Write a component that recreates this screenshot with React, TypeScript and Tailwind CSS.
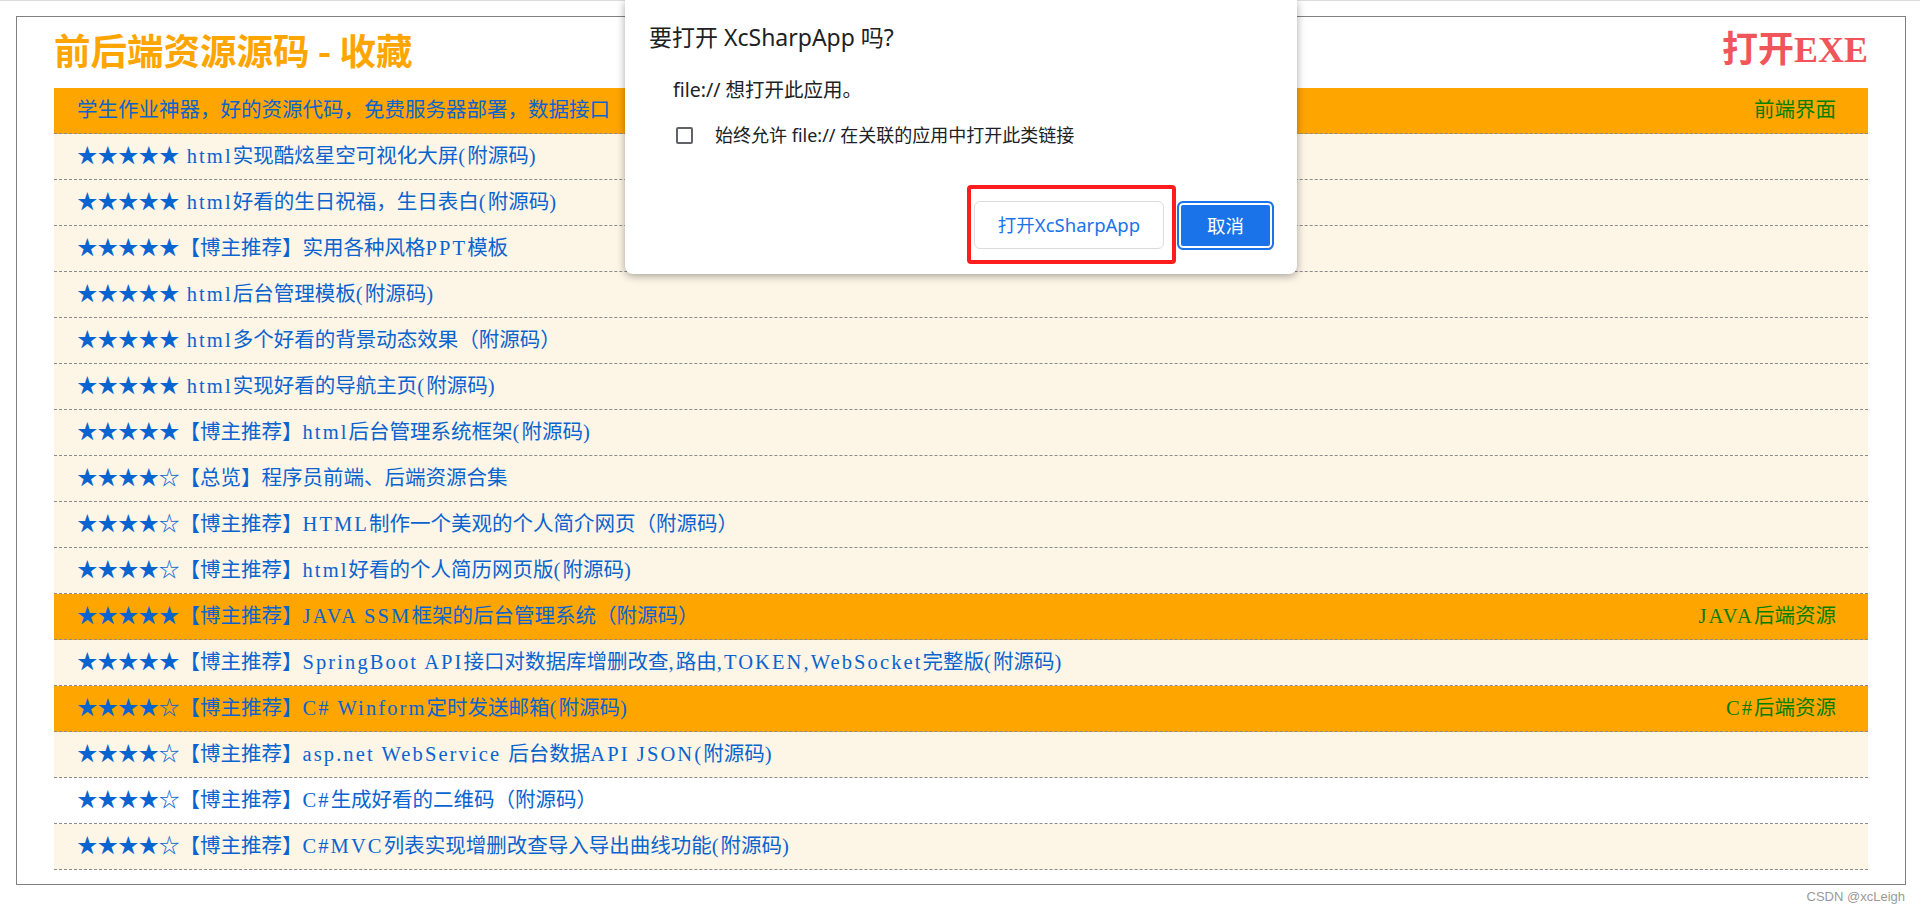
import { memo } from 'react';

type Row = {
  text: string;
  tag?: string;
  head?: boolean;
  white?: boolean;
};

const rows: Row[] = [
  {
    text: '学生作业神器，好的资源代码，免费服务器部署，数据接口',
    tag: '前端界面',
    head: true,
  },
  { text: '★★★★★ html实现酷炫星空可视化大屏(附源码)' },
  { text: '★★★★★ html好看的生日祝福，生日表白(附源码)' },
  { text: '★★★★★【博主推荐】实用各种风格PPT模板' },
  { text: '★★★★★ html后台管理模板(附源码)' },
  { text: '★★★★★ html多个好看的背景动态效果（附源码）' },
  { text: '★★★★★ html实现好看的导航主页(附源码)' },
  { text: '★★★★★【博主推荐】html后台管理系统框架(附源码)' },
  { text: '★★★★☆【总览】程序员前端、后端资源合集' },
  { text: '★★★★☆【博主推荐】HTML制作一个美观的个人简介网页（附源码）' },
  { text: '★★★★☆【博主推荐】html好看的个人简历网页版(附源码)' },
  {
    text: '★★★★★【博主推荐】JAVA SSM框架的后台管理系统（附源码）',
    tag: 'JAVA后端资源',
    head: true,
  },
  {
    text: '★★★★★【博主推荐】SpringBoot API接口对数据库增删改查,路由,TOKEN,WebSocket完整版(附源码)',
  },
  {
    text: '★★★★☆【博主推荐】C# Winform定时发送邮箱(附源码)',
    tag: 'C#后端资源',
    head: true,
  },
  { text: '★★★★☆【博主推荐】asp.net WebService 后台数据API JSON(附源码)' },
  { text: '★★★★☆【博主推荐】C#生成好看的二维码（附源码）', white: true },
  { text: '★★★★☆【博主推荐】C#MVC列表实现增删改查导入导出曲线功能(附源码)' },
];

const serif = "font-['Liberation_Serif','Noto_Sans_CJK_SC',serif]";

// latin runs get a little tracking so they take the room of the half-width song font
function Mixed({ text }: { text: string }) {
  const parts = text.split(/([\x20-\x7e]+)/).filter(Boolean);
  return (
    <>
      {parts.map((p, i) =>
        /^[\x20-\x7e]+$/.test(p) ? (
          <span key={i} className="tracking-[2.1px]">
            {p}
          </span>
        ) : (
          <span key={i}>{p}</span>
        )
      )}
    </>
  );
}

function ListRow({ row }: { row: Row }) {
  const bg = row.head ? 'bg-[#ffa500]' : row.white ? 'bg-white' : 'bg-[#fdf5e6]';
  return (
    <div
      className={`flex h-[46px] items-center justify-between border-b border-dashed border-[#8c8c8c] pl-[23px] pr-[32px] text-[20.5px] ${bg}`}
    >
      <span className="whitespace-nowrap text-[#0a64cf]">
        <Mixed text={row.text} />
      </span>
      {row.tag && (
        <span className="whitespace-nowrap text-[#008000]">
          <Mixed text={row.tag} />
        </span>
      )}
    </div>
  );
}

function Dialog() {
  const ui = "font-['Noto_Sans','Noto_Sans_CJK_SC',sans-serif]";
  return (
    <div
      className={`absolute left-[625px] top-0 w-[672px] rounded-b-[8px] bg-white pb-[24px] shadow-[0_2px_9px_rgba(0,0,0,0.35)] ${ui}`}
    >
      <div className="pl-[24px] pt-[21px] text-[23px] leading-[32px] text-[#202124]">
        要打开 XcSharpApp 吗?
      </div>
      <div className="pl-[48px] pt-[24px] text-[19.5px] leading-[26px] text-[#202124]">
        file:// 想打开此应用。
      </div>
      <div className="flex items-center gap-[22px] pl-[51px] pt-[20px] text-[18px] leading-[24px] text-[#202124]">
        <span className="block h-[17px] w-[17px] rounded-[2px] border-2 border-[#5f6368]" />
        <span>始终允许 file:// 在关联的应用中打开此类链接</span>
      </div>
      <div className="flex justify-end gap-[13px] pr-[23px] pt-[54px]">
        <button className="h-[48px] w-[190px] rounded-[6px] border border-[#dadce0] bg-white text-[18.5px] text-[#1a73e8]">
          打开XcSharpApp
        </button>
        <button className="h-[49px] w-[97px] rounded-[6px] border-2 border-[#1a73e8] bg-[#1a73e8] text-[18.5px] text-white shadow-[inset_0_0_0_2px_#ffffff]">
          取消
        </button>
      </div>
      <div className="pointer-events-none absolute left-[342px] top-[185px] h-[79px] w-[209px] rounded-[4px] border-4 border-[#ff1c1c]" />
    </div>
  );
}

function App() {
  return (
    <div className="relative h-[914px] w-[1920px] overflow-hidden bg-white">
      <div className="h-px bg-[#dcdcdc]" />
      <div className="ml-[16px] mt-[15px] h-[869px] w-[1890px] border border-[#808080] px-[37px]">
        <div className="flex h-[71px] items-center justify-between pb-[5px]">
          <h1 className="font-['Noto_Sans_CJK_SC',sans-serif] text-[36.5px] font-bold leading-none text-[#ffa500]">
            前后端资源源码 - 收藏
          </h1>
          <span className={`${serif} text-[36px] font-bold leading-none text-[#f0555a]`}>
            打开EXE
          </span>
        </div>
        <div className={serif}>
          {rows.map((r, i) => (
            <ListRow key={i} row={r} />
          ))}
        </div>
      </div>
      <div className="mt-[4px] pr-[15px] text-right font-['Liberation_Sans',sans-serif] text-[13px] leading-[16px] text-[#9a9a9a]">
        CSDN @xcLeigh
      </div>
      <Dialog />
    </div>
  );
}

export default memo(App);
